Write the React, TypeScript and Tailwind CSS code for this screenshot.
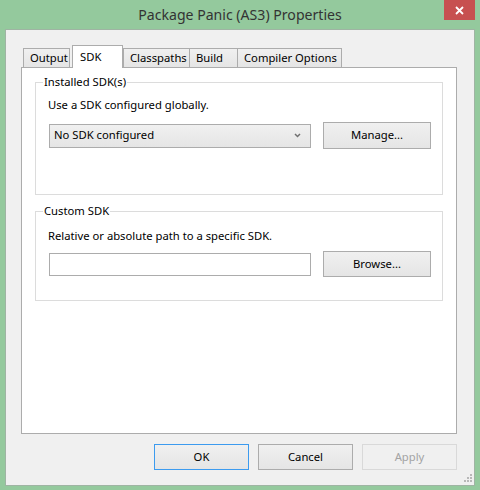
import { FC, ReactNode } from "react";

const font = "font-['Noto_Sans','Liberation_Sans',sans-serif]";

const Button: FC<{ children: ReactNode; className?: string; disabled?: boolean; focused?: boolean }> = ({
  children,
  className = "",
  disabled,
  focused,
}) => (
  <div
    className={`flex items-center justify-center border bg-linear-to-b ${
      disabled
        ? "border-[#d9d9d9] from-[#f0f0f0] to-[#f0f0f0] text-[#a3a3a3]"
        : focused
        ? "border-[#3c9bef] from-[#f0f0f0] to-[#e5e5e5] text-black"
        : "border-[#acacac] from-[#f0f0f0] to-[#e5e5e5] text-black"
    } ${className}`}
  >
    {children}
  </div>
);

const Tab: FC<{ label: string; selected?: boolean; className?: string }> = ({ label, selected, className = "" }) =>
  selected ? (
    <div className={`relative z-10 -mb-px flex h-[23px] items-start whitespace-nowrap border border-b-0 border-[#acacac] bg-white pl-[7px] pt-[3px] ${className}`}>
      {label}
    </div>
  ) : (
    <div
      className={`flex h-[19px] items-center whitespace-nowrap border border-b-0 border-[#acacac] bg-linear-to-b from-[#f0f0f0] to-[#e5e5e5] pl-[6px] ${className}`}
    >
      {label}
    </div>
  );

const GroupBox: FC<{ title: string; className?: string; children: ReactNode }> = ({ title, className = "", children }) => (
  <fieldset className={`mx-[13px] border border-[#dcdcdc] ${className}`}>
    <legend className="ml-[7px] px-[1px] leading-[16px]">{title}</legend>
    {children}
  </fieldset>
);

export default function App() {
  return (
    <div className={`flex h-[490px] w-[480px] flex-col bg-[#94c99d] text-[11.25px] text-black ${font}`}>
      {/* title bar */}
      <div className="relative flex h-[29px] items-center justify-center text-[14.1px] text-[#333333]">
        Package Panic (AS3) Properties
        <div className="absolute right-[5px] top-0 flex h-[20px] w-[31px] items-center justify-center bg-[#c75050]">
          <svg width="9" height="9" viewBox="0 0 9 9">
            <path d="M1 1L8 8M8 1L1 8" stroke="white" strokeWidth="1.8" />
          </svg>
        </div>
      </div>

      {/* client */}
      <div className="relative mx-[5px] h-[457px] border border-[#9fb4a3] bg-[#f0f0f0] pl-[15px] pr-[17px] pt-[15px]">
        <div className="flex h-[22px] items-end pl-[2px]">
          <Tab label="Output" className="w-[47px]" />
          <Tab label="SDK" selected className="ml-[2px] w-[51px]" />
          <Tab label="Classpaths" className="w-[67px]" />
          <Tab label="Build" className="-ml-px w-[49px]" />
          <Tab label="Compiler Options" className="-ml-px w-[105px]" />
        </div>
        <div className="h-[367px] border border-[#acacac] bg-white pt-[6px]">
          <GroupBox title="Installed SDK(s)" className="h-[121px]">
            <div className="pl-[12px] pt-[7px] leading-[16px]">Use a SDK configured globally.</div>
            <div className="mt-[9px] flex items-center pl-[13px]">
              <div className="flex h-[24px] w-[262px] items-center justify-between border border-[#acacac] bg-linear-to-b from-[#f0f0f0] to-[#e5e5e5] pl-[4px] pr-[9px]">
                <span>No SDK configured</span>
                <svg width="7" height="5" viewBox="0 0 7 5">
                  <path d="M1 1L3.5 3.5L6 1" stroke="#707070" strokeWidth="1.5" fill="none" />
                </svg>
              </div>
              <Button className="ml-[12px] h-[27px] w-[108px]">Manage...</Button>
            </div>
          </GroupBox>
          <GroupBox title="Custom SDK" className="mt-[8px] h-[98px]">
            <div className="pl-[12px] pt-[9px] leading-[16px]">Relative or absolute path to a specific SDK.</div>
            <div className="mt-[7px] flex items-center pl-[13px]">
              <div className="h-[23px] w-[262px] border border-[#acacac] bg-white" />
              <Button className="ml-[12px] h-[26px] w-[108px]">Browse...</Button>
            </div>
          </GroupBox>
        </div>
        <div className="mt-[10px] flex justify-end gap-[9px]">
          <Button focused className="h-[26px] w-[95px]">OK</Button>
          <Button className="h-[26px] w-[95px]">Cancel</Button>
          <Button disabled className="h-[26px] w-[95px]">Apply</Button>
        </div>
        <svg className="absolute bottom-[2px] right-[1px]" width="10" height="10" viewBox="0 0 10 10">
          <g fill="#b8b8b8">
            <rect x="7" y="1" width="2" height="2" />
            <rect x="4" y="4" width="2" height="2" />
            <rect x="7" y="4" width="2" height="2" />
            <rect x="1" y="7" width="2" height="2" />
            <rect x="4" y="7" width="2" height="2" />
            <rect x="7" y="7" width="2" height="2" />
          </g>
        </svg>
      </div>
    </div>
  );
}
